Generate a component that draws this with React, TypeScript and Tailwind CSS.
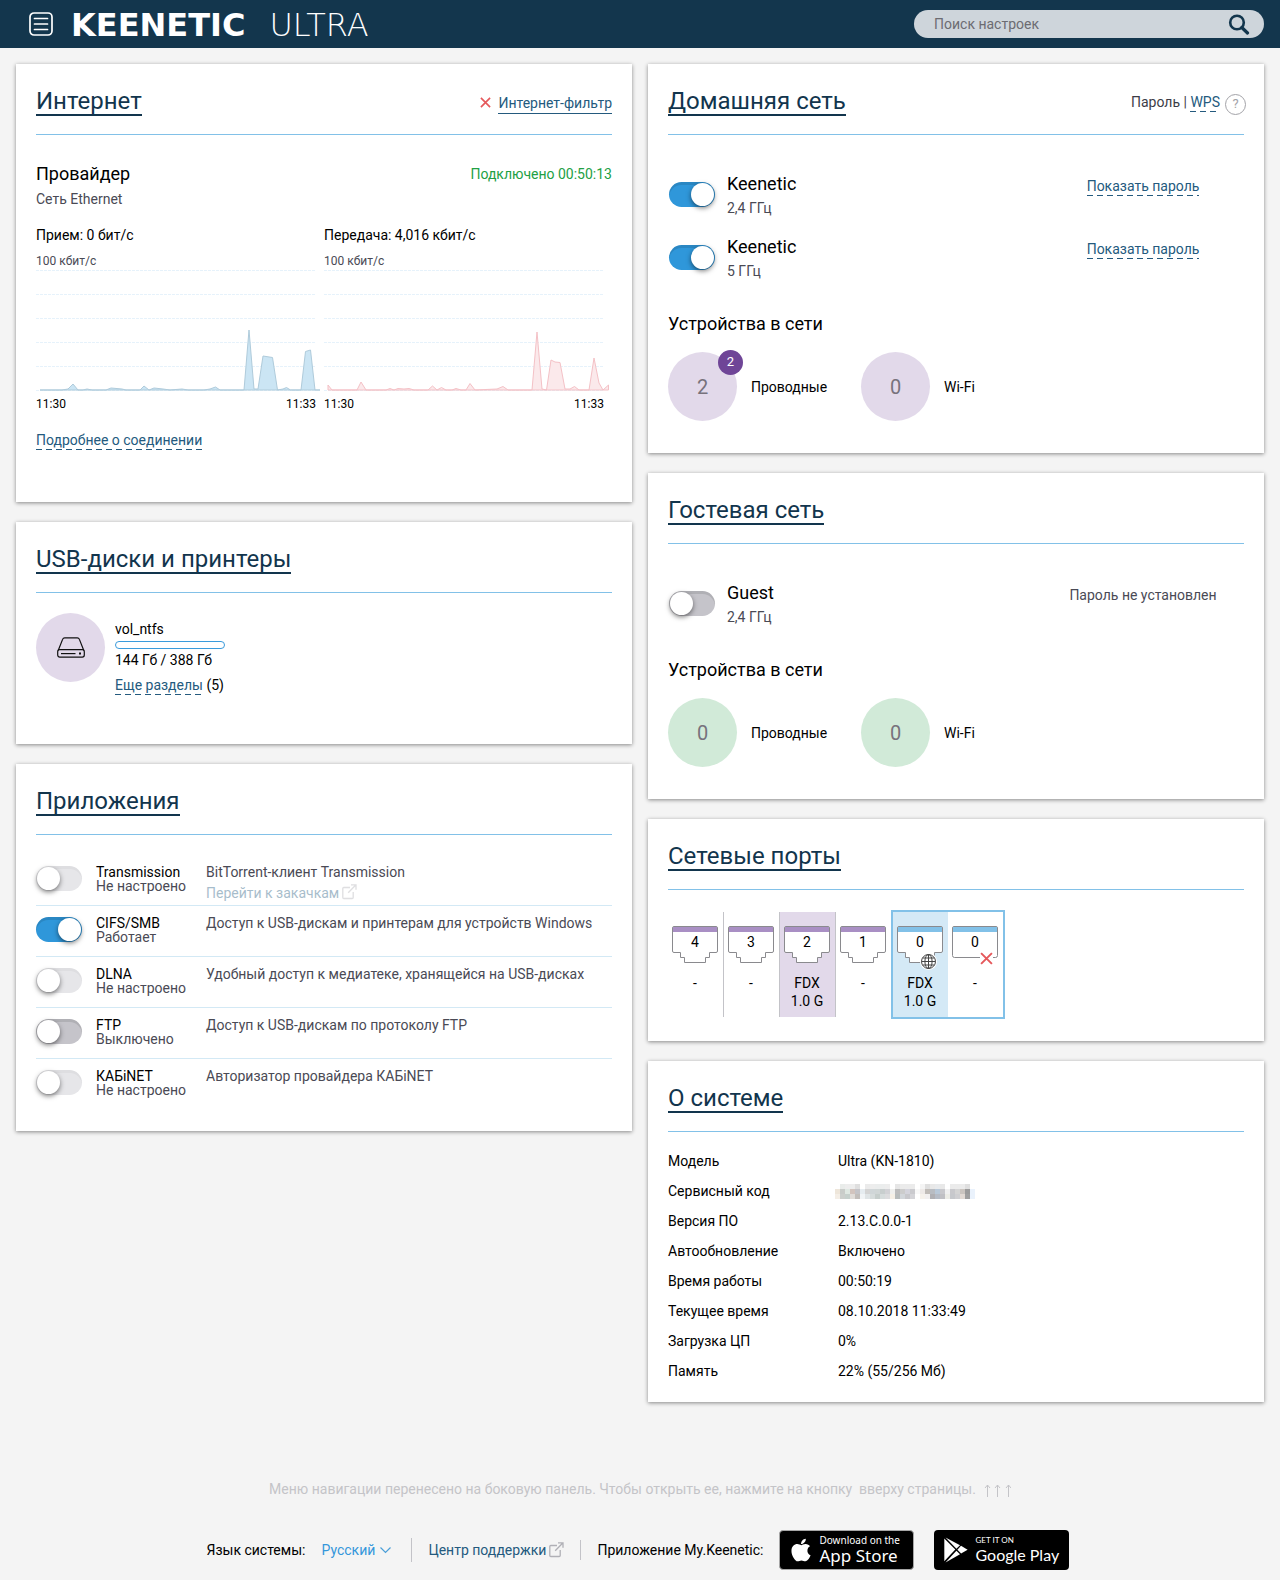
// src/pages/Dashboard.tsx
//
// Router dashboard: two columns of cards on a light background.

import type { ReactNode } from "react"
import { FaApple } from "react-icons/fa"

// ─── Data ─────────────────────────────────────────────────────────────────────

interface AppItem {
  id: string
  name: string
  status: string
  description: string
  enabled?: boolean
  configured: boolean
  link?: string
}

const APPS: AppItem[] = [
  {
    id: "transmission",
    name: "Transmission",
    status: "Не настроено",
    description: "BitTorrent-клиент Transmission",
    configured: false,
    link: "Перейти к закачкам",
  },
  {
    id: "cifs",
    name: "CIFS/SMB",
    status: "Работает",
    description: "Доступ к USB-дискам и принтерам для устройств Windows",
    enabled: true,
    configured: true,
  },
  {
    id: "dlna",
    name: "DLNA",
    status: "Не настроено",
    description: "Удобный доступ к медиатеке, хранящейся на USB-дисках",
    configured: false,
  },
  {
    id: "ftp",
    name: "FTP",
    status: "Выключено",
    description: "Доступ к USB-дискам по протоколу FTP",
    configured: true,
  },
  {
    id: "kabinet",
    name: "КАБiNET",
    status: "Не настроено",
    description: "Авторизатор провайдера КАБiNET",
    configured: false,
  },
]

const SYSTEM_INFO: { label: string; value: string | null }[] = [
  { label: "Модель", value: "Ultra (KN-1810)" },
  { label: "Сервисный код", value: null },
  { label: "Версия ПО", value: "2.13.C.0.0-1" },
  { label: "Автообновление", value: "Включено" },
  { label: "Время работы", value: "00:50:19" },
  { label: "Текущее время", value: "08.10.2018 11:33:49" },
  { label: "Загрузка ЦП", value: "0%" },
  { label: "Память", value: "22% (55/256 Мб)" },
]

// Points are in chart units: x 0..288, y 0..120 where 120 is the zero line.
const RX_POINTS =
  "4,120 26,120 32,119 37,114 42,120 47,120 51,119 56,120 70,120 75,118 86,119 90,120 104,120 108,116 113,120 118,118 127,119 134,120 146,119 152,120 168,120 174,119 179.5,117 184,120 208,120 213,60 218,119 222,119 227,86 236.5,87.5 241.5,120 247,119 250.5,117.5 254.5,120 265,120 269.5,81.5 274.5,80 279,120 284,120"
const TX_POINTS =
  "4,120 4,115 8,120 33,120 37,112 42,120 62,120 66,118.5 70,120 74,118.5 80,119 85,118.5 90,120 104,120 108.5,116 113,120 117.5,117.5 122,120 128,120 132,118.5 137,120 142,120 146,113.5 151,120 173,119 179,116.5 184,120 208,120 213,62 218,119 222.5,120 227,90 231,92 236,92.5 241,119 246,119 250.5,116.5 255,120 265,120 270,88 275,113 279,120 284.5,115 284.5,120"

const CODE_MOSAIC = [
  "#fff #e9ecea #ededed #ededed #dfdfdf #fff #ebebeb #ededed #ebeded #ebeded #ededed #fff #e6e6e6 #ebebeb #ebebeb #ebebeb #fff #f4f4f4 #dfdfdf #e8e8e8 #e8eaec #e8e8e8 #fff #ebebeb #ebebeb #ebebeb #dfdfdf #fff",
  "#eee6da #c9ccc9 #dfe8e2 #d2c4be #c4c4c8 #e6ecf0 #d4d4d4 #d0d6d8 #d0d6d6 #c8cece #d2d2d6 #f0f0ee #bcbcbc #cccccc #d4d4dc #cacace #f8f8f8 #eeeae8 #c0bcb8 #b8bcc2 #b8c8d8 #c8c8cc #f0f0f0 #c8c8cc #d4d4d4 #cbc5c0 #9c9c9c #eaf2fc",
  "#f4eee6 #cccfcc #c6d0cc #e0dcd8 #c2bebb #f1f4f6 #dfe4e6 #d6dcdc #c6cecc #d6dcdc #dcdcde #f6f0e6 #b8bcbc #d2d6da #c8c8cc #d4d4d8 #fff #f6f2ec #f2f0f0 #b0b0b4 #b6bcc6 #c0c0c4 #ecece6 #c6c8cc #cfcfd2 #e2dad4 #a0a0a0 #eaf2fc",
].map((row) => row.split(" "))

// ─── Shared pieces ────────────────────────────────────────────────────────────

function Card({ title, aside, children }: { title: string; aside?: ReactNode; children: ReactNode }) {
  return (
    <section className="bg-white px-5 shadow-[0_1px_4px_rgba(0,0,0,0.45)]">
      <div className="flex h-[71px] items-start justify-between border-b border-[#82c1e8] pt-6">
        <h2>
          <a
            href="#"
            className="inline-block border-b-2 border-[#12354d] text-2xl leading-[26px] text-[#12354d]"
          >
            {title}
          </a>
        </h2>
        {aside}
      </div>
      {children}
    </section>
  )
}

function Toggle({ id, checked, inactive }: { id: string; checked?: boolean; inactive?: boolean }) {
  return (
    <input
      id={id}
      type="checkbox"
      role="switch"
      defaultChecked={checked}
      disabled={inactive}
      className="h-[25px] w-[46px] shrink-0 appearance-none rounded-full bg-[#c5c4ca] p-px shadow-[inset_0_3px_0_rgba(0,0,0,0.1)] before:block before:size-[23px] before:rounded-full before:bg-white before:shadow-[0_2px_5px_rgba(0,0,0,0.5)] checked:bg-[#2f97da] checked:before:translate-x-[21px] disabled:bg-[#e6e6e9] disabled:shadow-[inset_0_3px_0_rgba(0,0,0,0.03)]"
    />
  )
}

// The underline is a gradient because border-dashed gives much shorter dashes.
function DashedLink({ children }: { children: ReactNode }) {
  return (
    <a
      href="#"
      className="inline-block bg-[linear-gradient(to_right,#245a7e_60%,transparent_60%)] bg-[length:10px_1px] bg-[position:0_100%] bg-repeat-x pb-px leading-[18px] text-[#245a7e]"
    >
      {children}
    </a>
  )
}

function ExternalIcon() {
  return (
    <svg width="15" height="16" viewBox="0 0 15 16" fill="none" stroke="#b0b0b6" strokeWidth="1.3">
      <path d="M8 3.5H1.8a1 1 0 0 0-1 1v9a1 1 0 0 0 1 1h8.4a1 1 0 0 0 1-1V8" />
      <path d="M9 .8h5v5M14 .8 6.2 8.8" />
    </svg>
  )
}

function RedCross({ size }: { size: number }) {
  return (
    <svg width={size} height={size} viewBox="0 0 12 12" stroke="#e5585b" strokeWidth="1.8">
      <path d="M1 1l10 10M11 1L1 11" />
    </svg>
  )
}

// ─── Internet ─────────────────────────────────────────────────────────────────

interface TrafficChartProps {
  caption: string
  points: string
  fill: string
  stroke: string
}

function TrafficChart({ caption, points, fill, stroke }: TrafficChartProps) {
  return (
    <div className="w-[280px]">
      <p className="leading-5">{caption}</p>
      <p className="mt-2 text-xs leading-[17px] text-[#4a4a55]">100 кбит/с</p>
      <svg width="288" height="122" viewBox="0 0 288 122" className="block max-w-none">
        {[1, 25, 49, 73, 97, 121].map((y) => (
          <path key={y} d={`M0 ${y - 0.5}H280`} stroke="#e6f2fb" strokeDasharray="3 1" />
        ))}
        <polygon points={points} fill={fill} stroke={stroke} strokeLinejoin="round" />
      </svg>
      <div className="mt-[2px] flex justify-between text-xs leading-5">
        <span>11:30</span>
        <span>11:33</span>
      </div>
    </div>
  )
}

function InternetCard() {
  return (
    <Card
      title="Интернет"
      aside={
        <div className="mt-[6px] flex items-start gap-[7px]">
          <div className="pt-[3px]">
            <RedCross size={11} />
          </div>
          <a href="#" className="border-b border-[#245a7e] pb-px leading-[18px] text-[#245a7e]">
            Интернет-фильтр
          </a>
        </div>
      }
    >
      <div className="pt-[27px] pb-[52px]">
        <div className="flex items-start justify-between leading-6">
          <h3 className="text-lg leading-6">Провайдер</h3>
          <span className="text-[#22a044]">Подключено 00:50:13</span>
        </div>
        <p className="mt-[3px] leading-5 text-[#4a4a55]">Сеть Ethernet</p>
        <div className="mt-4 flex gap-2">
          <TrafficChart caption="Прием: 0 бит/с" points={RX_POINTS} fill="#cbe5f4" stroke="#afcbdb" />
          <TrafficChart caption="Передача: 4,016 кбит/с" points={TX_POINTS} fill="#fbe9eb" stroke="#f4c1c6" />
        </div>
        <div className="mt-4">
          <DashedLink>Подробнее о соединении</DashedLink>
        </div>
      </div>
    </Card>
  )
}

// ─── USB ──────────────────────────────────────────────────────────────────────

function UsbCard() {
  return (
    <Card title="USB-диски и принтеры">
      <div className="flex gap-[10px] pt-5 pb-[49px]">
        <div className="flex size-[69px] items-center justify-center rounded-full bg-[#e2d9ea]">
          <svg width="28" height="21" viewBox="0 0 28 21" fill="none" stroke="#111" strokeWidth="1.2">
            <path d="M1.2 13.5 5.6 2.4C6 1.2 6.6.8 7.7.8h12.6c1.1 0 1.7.4 2.1 1.6l4.4 11.1" />
            <rect x=".7" y="12.7" width="26.6" height="7.4" rx="2" />
            <path d="M4 16.6h14.5" />
            <path d="M22 16.6h2" strokeWidth="2" />
          </svg>
        </div>
        <div className="pt-[7px]">
          <p className="leading-[18px]">vol_ntfs</p>
          <div className="mt-[3px] h-2 w-[110px] rounded-full border border-[#3a9bdc]" />
          <p className="mt-[2px] leading-[18px]">144 Гб / 388 Гб</p>
          <p className="mt-[6px]">
            <DashedLink>Еще разделы</DashedLink> (5)
          </p>
        </div>
      </div>
    </Card>
  )
}

// ─── Applications ─────────────────────────────────────────────────────────────

function AppsCard() {
  return (
    <Card title="Приложения">
      <ul className="pt-5 pb-[21px]">
        {APPS.map((app) => (
          <li
            key={app.id}
            className="flex h-[51px] border-b border-[#d3e9f5] pt-[10px] leading-[14px] last:border-transparent"
          >
            <div className="pt-px">
              <Toggle id={app.id} checked={app.enabled} inactive={!app.configured} />
            </div>
            <div className="ml-[14px] w-[110px] shrink-0">
              <label htmlFor={app.id} className="block">
                {app.name}
              </label>
              <p className="text-[#4a4a55]">{app.status}</p>
            </div>
            <div className="text-[#4a4a55]">
              <p>{app.description}</p>
              {app.link && (
                <a href="#" className="flex items-end gap-[3px] pt-[5px] text-[#245a7e] opacity-40">
                  {app.link}
                  <ExternalIcon />
                </a>
              )}
            </div>
          </li>
        ))}
      </ul>
    </Card>
  )
}

// ─── Home and guest networks ──────────────────────────────────────────────────

interface NetworkRowProps {
  id: string
  name: string
  band: string
  checked?: boolean
  children: ReactNode
}

function NetworkRow({ id, name, band, checked, children }: NetworkRowProps) {
  return (
    <div className="flex h-[63px] pl-px">
      <div className="pt-[10px]">
        <Toggle id={id} checked={checked} />
      </div>
      <div className="ml-3 flex-1">
        <label htmlFor={id} className="block text-lg leading-6">
          {name}
        </label>
        <p className="leading-6 text-[#4a4a55]">{band}</p>
      </div>
      <div className="w-[202px] pt-[5px] text-center leading-[18px] text-[#4a4a55]">{children}</div>
    </div>
  )
}

function Devices({ color, wired, wifi, badge }: { color: string; wired: number; wifi: number; badge?: number }) {
  const items = [
    { label: "Проводные", count: wired, badge },
    { label: "Wi-Fi", count: wifi, badge: undefined },
  ]
  return (
    <div className="pt-[14px] pb-8">
      <h3 className="text-lg leading-6">Устройства в сети</h3>
      <div className="mt-4 flex">
        {items.map((item) => (
          <div key={item.label} className="flex w-[193px] items-center gap-[14px]">
            <div
              className={`relative flex size-[69px] items-center justify-center rounded-full text-xl text-[#77727c] ${color}`}
            >
              {item.count}
              {item.badge && (
                <span className="absolute -top-0.5 -right-1.5 flex size-[25px] items-center justify-center rounded-full bg-[#6f4597] text-[13px] text-white">
                  {item.badge}
                </span>
              )}
            </div>
            <span>{item.label}</span>
          </div>
        ))}
      </div>
    </div>
  )
}

function HomeNetworkCard() {
  return (
    <Card
      title="Домашняя сеть"
      aside={
        <div className="-mr-0.5 flex gap-[5px] pt-[5px]">
          <div className="leading-[18px] text-[#3c3c46]">
            Пароль | <DashedLink>WPS</DashedLink>
          </div>
          <button
            type="button"
            aria-label="Справка"
            className="mt-px flex size-[21px] items-center justify-center rounded-full border border-[#a3a3a8] text-[13px] text-[#a3a3a8]"
          >
            ?
          </button>
        </div>
      }
    >
      <div className="pt-[37px]">
        <NetworkRow id="wifi-24" name="Keenetic" band="2,4 ГГц" checked>
          <DashedLink>Показать пароль</DashedLink>
        </NetworkRow>
        <NetworkRow id="wifi-5" name="Keenetic" band="5 ГГц" checked>
          <DashedLink>Показать пароль</DashedLink>
        </NetworkRow>
        <Devices color="bg-[#e2d9ea]" wired={2} wifi={0} badge={2} />
      </div>
    </Card>
  )
}

function GuestNetworkCard() {
  return (
    <Card title="Гостевая сеть">
      <div className="pt-[37px]">
        <NetworkRow id="wifi-guest" name="Guest" band="2,4 ГГц">
          Пароль не установлен
        </NetworkRow>
        <Devices color="bg-[#d1ead8]" wired={0} wifi={0} />
      </div>
    </Card>
  )
}

// ─── Ports ────────────────────────────────────────────────────────────────────

const RJ45_OUTLINE =
  "M2 .5H44A1.5 1.5 0 0 1 45.5 2V25A1.5 1.5 0 0 1 44 26.5H37.5V31.5H33.5V36.5H12.5V31.5H8.5V26.5H2A1.5 1.5 0 0 1 .5 25V2A1.5 1.5 0 0 1 2 .5Z"
const SFP_OUTLINE =
  "M2 .5H44A1.5 1.5 0 0 1 45.5 2V29.5A2 2 0 0 1 43.5 31.5H2.5A2 2 0 0 1 .5 29.5V2A1.5 1.5 0 0 1 2 .5Z"

interface PortProps {
  number: number
  accent: string
  className?: string
  mode?: string
  speed?: string
  sfp?: boolean
  icon?: ReactNode
}

function Port({ number, accent, className = "", mode = "-", speed, sfp, icon }: PortProps) {
  return (
    <div className={`h-[105px] px-1 pt-[14px] ${className}`}>
      <div className="relative h-[37px] w-[46px]">
        <svg width="46" height="37" viewBox="0 0 46 37" className="block">
          <path d={sfp ? SFP_OUTLINE : RJ45_OUTLINE} fill="#fff" stroke="#8a8a8e" />
          <path d="M1 1H45V6H1Z" fill={accent} />
        </svg>
        <span className="absolute inset-x-0 top-[7px] text-center leading-[18px]">{number}</span>
        {icon}
      </div>
      <p className="mt-[11px] w-[46px] text-center leading-[18px]">
        {mode}
        {speed && <span className="block">{speed}</span>}
      </p>
    </div>
  )
}

function GlobeBadge() {
  return (
    <svg
      width="17"
      height="17"
      viewBox="0 0 17 17"
      fill="none"
      stroke="#444"
      className="absolute right-1.5 -bottom-[7px]"
    >
      <circle cx="8.5" cy="8.5" r="8.5" fill="#fff" stroke="none" />
      <circle cx="8.5" cy="8.5" r="7" />
      <ellipse cx="8.5" cy="8.5" rx="3.6" ry="7" />
      <path d="M8.5 1.5v14M1.5 8.5h14M2.6 5h11.8M2.6 12h11.8" />
    </svg>
  )
}

function PortsCard() {
  return (
    <Card title="Сетевые порты">
      <div className="flex items-center pt-5 pb-[22px]">
        <Port number={4} accent="#a98fc4" className="w-14 border-r border-[#c3c3c8]" />
        <Port number={3} accent="#a98fc4" className="w-14 border-r border-[#c3c3c8]" />
        <Port
          number={2}
          accent="#a98fc4"
          mode="FDX"
          speed="1.0 G"
          className="w-14 border-r border-[#c3c3c8] bg-[#e2d9ea]"
        />
        <Port number={1} accent="#a98fc4" className="w-[55px]" />
        <div className="flex border-2 border-[#82c1e8]">
          <Port
            number={0}
            accent="#82c1e8"
            mode="FDX"
            speed="1.0 G"
            className="w-[55px] bg-[#d4e9f6]"
            icon={<GlobeBadge />}
          />
          <Port
            number={0}
            accent="#82c1e8"
            className="w-[55px]"
            sfp
            icon={
              <span className="absolute right-[5px] -bottom-0.5 bg-white">
                <RedCross size={13} />
              </span>
            }
          />
        </div>
      </div>
    </Card>
  )
}

// ─── System ───────────────────────────────────────────────────────────────────

function HiddenCode() {
  return (
    <svg
      width="140"
      height="15"
      viewBox="0 0 140 15"
      shapeRendering="crispEdges"
      className="-ml-[3px] block"
      aria-label="Скрыто"
    >
      {CODE_MOSAIC.map((row, y) =>
        row.map((color, x) => (
          <rect key={`${x}-${y}`} x={x * 5} y={y * 5} width="5" height="5" fill={color} />
        ))
      )}
    </svg>
  )
}

function SystemCard() {
  return (
    <Card title="О системе">
      <div className="pt-[14px] pb-4">
        <table className="w-full text-left">
          <tbody>
            {SYSTEM_INFO.map((row) => (
              <tr key={row.label} className="h-[30px]">
                <th scope="row" className="w-[170px] font-normal">
                  {row.label}
                </th>
                <td>{row.value ?? <HiddenCode />}</td>
              </tr>
            ))}
          </tbody>
        </table>
      </div>
    </Card>
  )
}

// ─── Page chrome ──────────────────────────────────────────────────────────────

function Header() {
  return (
    <header className="flex h-12 items-center justify-between bg-[#13364d] pr-4 pl-[29px]">
      <div className="flex items-center gap-[18px]">
        <button type="button" aria-label="Меню">
          <svg width="24" height="24" viewBox="0 0 24 24" fill="none" stroke="#fff" className="block">
            <rect x="1" y="1" width="22" height="22" rx="4" strokeWidth="1.7" />
            <path d="M5.5 6.5h13M5.5 12h13M5.5 17.5h13" strokeWidth="1.7" strokeLinecap="round" />
          </svg>
        </button>
        <a
          href="#"
          className="flex items-center gap-6 pt-0.5 font-['DejaVu_Sans',sans-serif] text-[32px] leading-8 whitespace-nowrap text-white"
        >
          <span className="font-bold">KEENETIC</span>
          <span className="font-extralight">ULTRA</span>
        </a>
      </div>
      <form role="search" className="flex h-7 w-[350px] items-center rounded-full bg-[#ced5db] pr-[14px] pl-5">
        <input
          type="search"
          aria-label="Поиск настроек"
          placeholder="Поиск настроек"
          className="min-w-0 flex-1 bg-transparent outline-none placeholder:text-[#6c6c72]"
        />
        <button type="button" aria-label="Найти">
          <svg width="22" height="21" viewBox="0 0 22 21" fill="none" stroke="#13364d" className="block">
            <circle cx="9" cy="8.5" r="6.8" strokeWidth="2.6" />
            <path d="M13.8 13.5 19.5 19" strokeWidth="3.2" strokeLinecap="round" />
          </svg>
        </button>
      </form>
    </header>
  )
}

function Footer() {
  return (
    <footer className="pt-[73px] pb-[10px]">
      <p className="text-center leading-7 text-[#c4c4c8]">
        Меню навигации перенесено на боковую панель. Чтобы открыть ее, нажмите на кнопку &nbsp;вверху страницы.
        <svg width="27" height="13" viewBox="0 0 27 13" fill="none" stroke="#c4c4c8" className="ml-2 inline-block">
          <path d="M3.5 13V1M1 4l2.5-3L6 4M13.5 13V1M11 4l2.5-3L16 4M24.5 13V1M22 4l2.5-3L27 4" />
        </svg>
      </p>
      <div className="mt-[27px] flex items-center justify-center pr-1">
        <label htmlFor="language">Язык системы:</label>
        <div className="relative ml-4 flex items-center">
          <select id="language" className="appearance-none bg-transparent pr-4 text-[#3497db] outline-none">
            <option>Русский</option>
          </select>
          <svg
            width="11"
            height="7"
            viewBox="0 0 11 7"
            fill="none"
            stroke="#4b9fd8"
            strokeWidth="1.2"
            className="pointer-events-none absolute right-0"
          >
            <path d="M.5.5l5 5 5-5" />
          </svg>
        </div>
        <a href="#" className="ml-5 flex h-6 items-center gap-[3px] border-l border-[#c3c3c8] pl-4 text-[#245a7e]">
          Центр поддержки
          <ExternalIcon />
        </a>
        <span className="ml-4 flex h-5 items-center border-l border-[#c3c3c8] pl-4">Приложение My.Keenetic:</span>
        <a
          href="#"
          className="ml-4 flex h-10 w-[135px] items-center gap-2 rounded border border-[#a6a6a6] bg-black pl-[11px] font-['Noto_Sans',sans-serif] whitespace-nowrap text-white"
        >
          <FaApple className="h-[26px] w-5" />
          <span>
            <span className="block text-[10px] leading-3">Download on the</span>
            <span className="block text-[17px] leading-5">App Store</span>
          </span>
        </a>
        <a
          href="#"
          className="ml-5 flex h-10 w-[135px] items-center gap-[7px] rounded bg-black pl-[10px] font-['Lato',sans-serif] whitespace-nowrap text-white"
        >
          <svg width="24" height="26" viewBox="0 0 24 26" fill="#fff">
            <path d="M.3 1.5 11.3 12.6.3 24.2Z" />
            <path d="M1.5.5 16 8.2 12.4 11.7Z" />
            <path d="M17 8.8 23.6 12.7 17.1 16.6 13.4 12.7Z" />
            <path d="M1.5 25.5 12.4 13.7 16 17.2Z" />
          </svg>
          <span>
            <span className="block text-[8px] leading-[10px]">GET IT ON</span>
            <span className="block text-base leading-5">Google Play</span>
          </span>
        </a>
      </div>
    </footer>
  )
}

export default function App() {
  return (
    <div className="min-h-screen bg-[#f4f4f4] font-['Roboto',sans-serif] text-sm text-black">
      <Header />
      <main className="grid grid-cols-2 items-start gap-4 px-4 pt-4">
        <div className="grid gap-5">
          <InternetCard />
          <UsbCard />
          <AppsCard />
        </div>
        <div className="grid gap-5">
          <HomeNetworkCard />
          <GuestNetworkCard />
          <PortsCard />
          <SystemCard />
        </div>
      </main>
      <Footer />
    </div>
  )
}
